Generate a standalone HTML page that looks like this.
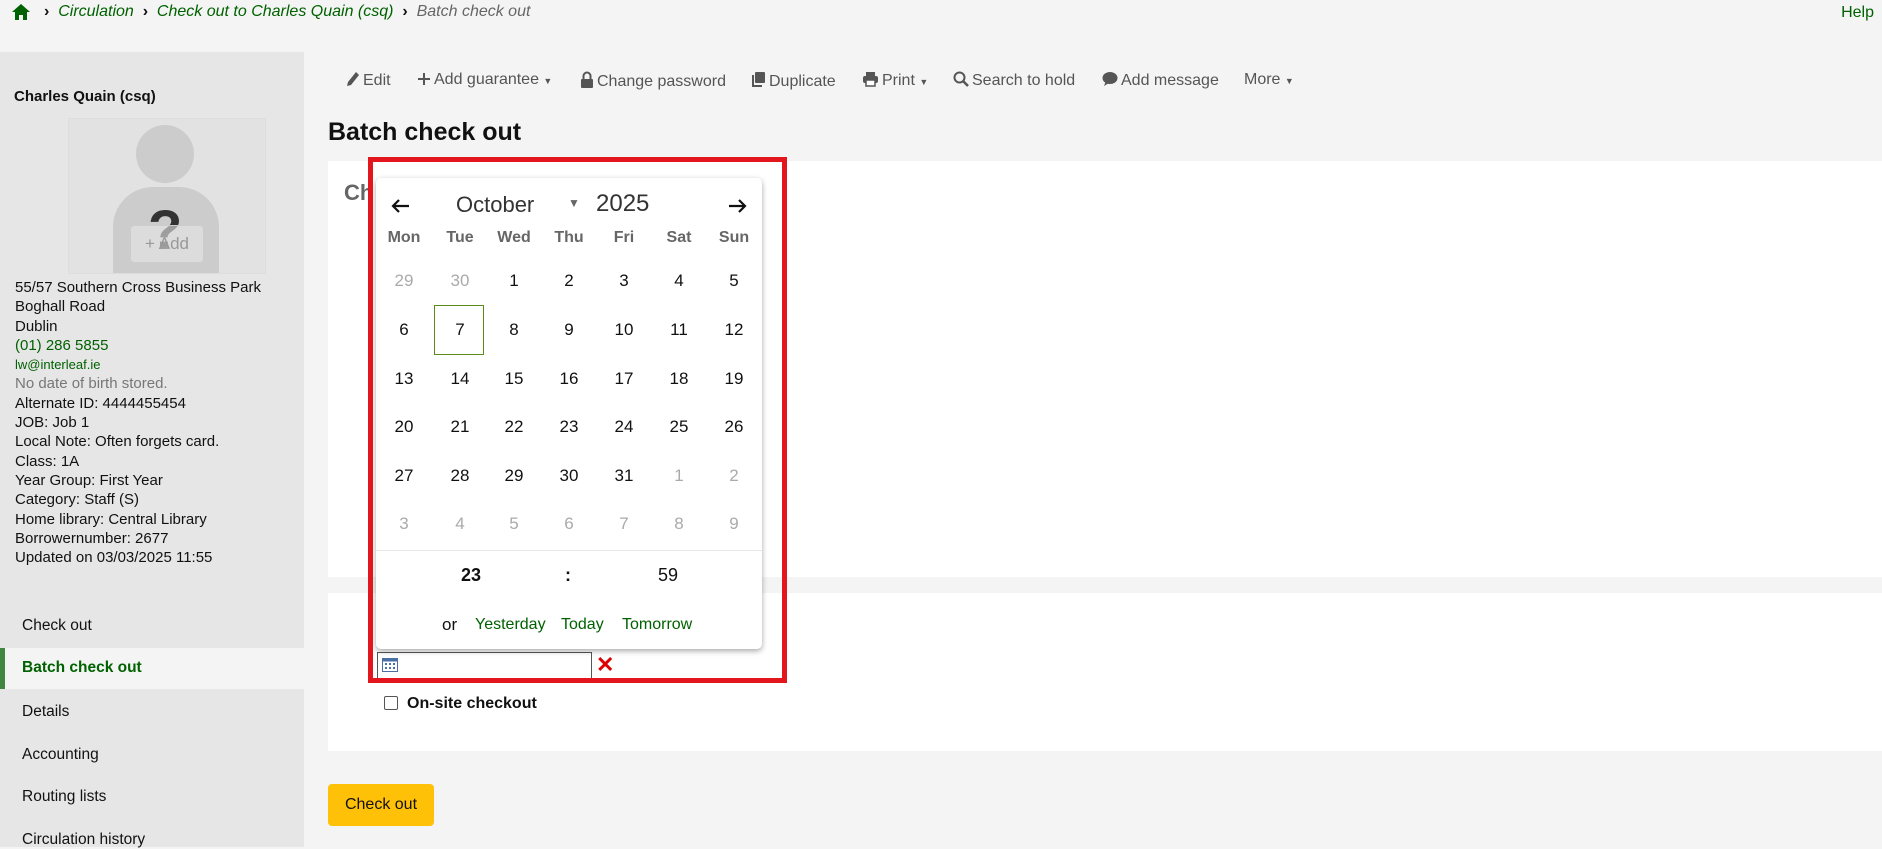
<!DOCTYPE html>
<html><head><meta charset="utf-8"><style>
*{box-sizing:border-box;margin:0;padding:0}
body{width:1882px;height:847px;overflow:hidden;background:#f3f4f3;font-family:"Liberation Sans",sans-serif;color:#111;position:relative}
.a{position:absolute;white-space:nowrap}
.g{color:#006100}
.side{position:absolute;left:0;top:52px;width:304px;height:795px;background:#e6e6e6}
.info{position:absolute;left:15px;top:278px;font-size:15px;line-height:19.3px}
.menu{position:absolute;left:22px;font-size:15.5px}
.tb{top:71px;font-size:16px;color:#555}
.tb svg{vertical-align:-2px;margin-right:3px}
.cal{position:absolute;left:376px;top:178px;width:386px;height:471px;background:#fff;border-radius:5px;box-shadow:0 2px 6px rgba(0,0,0,.35)}
.c{position:absolute;width:56px;text-align:center;font-size:17px;transform:translateX(-28px)}
.dn{font-weight:bold;color:#666;font-size:16px}
.gr{color:#aaa}
</style></head><body>
<svg class="a" style="left:11px;top:3px" width="20" height="18" viewBox="0 0 20 18"><path d="M10 1 L1 9 H4 V17 H8 V12 H12 V17 H16 V9 H19 Z" fill="#006100"/></svg>
<div class="a" style="left:44px;top:3px;font-size:16px;font-style:italic"><b style="font-style:normal">&#8250;</b>&nbsp;&nbsp;<span class="g">Circulation</span>&nbsp;&nbsp;<b style="font-style:normal">&#8250;</b>&nbsp;&nbsp;<span class="g">Check out to Charles Quain (csq)</span>&nbsp;&nbsp;<b style="font-style:normal">&#8250;</b>&nbsp;&nbsp;<span style="color:#666">Batch check out</span></div>
<div class="a g" style="right:8px;top:4px;font-size:16px">Help</div>

<div class="side">
<div class="a" style="left:14px;top:36px;font-size:15px;font-weight:bold">Charles Quain (csq)</div>
<div class="a" style="left:68px;top:66px;width:198px;height:156px;border:1px solid #ddd;background:#e2e2e2;overflow:hidden">
<div class="a" style="left:67px;top:6px;width:58px;height:58px;border-radius:50%;background:#ccc"></div>
<div class="a" style="left:44px;top:68px;width:106px;height:100px;border-radius:40px 40px 0 0;background:#ccc"></div>
<div class="a" style="left:79px;top:78px;font-size:56px;font-weight:bold;color:#333">?</div>
<div class="a" style="left:61px;top:106px;width:74px;height:38px;border:1px solid #ccc;border-radius:4px;background:rgba(230,230,230,.6);font-size:17px;color:#999;text-align:center;line-height:36px">+ Add</div>
</div>
</div>
<div class="info">
55/57 Southern Cross Business Park<br>Boghall Road<br>Dublin<br><span class="g">(01) 286 5855</span><br><span class="g" style="font-size:13px">lw@interleaf.ie</span><br><span style="color:#777">No date of birth stored.</span><br>Alternate ID: 4444455454<br>JOB: Job 1<br>Local Note: Often forgets card.<br>Class: 1A<br>Year Group: First Year<br>Category: Staff (S)<br>Home library: Central Library<br>Borrowernumber: 2677<br>Updated on 03/03/2025 11:55</div>
<div class="a" style="left:0;top:648px;width:304px;height:41px;background:#f3f4f3;border-left:5px solid #408540"></div>
<div class="menu a" style="top:617px">Check out</div>
<div class="menu a g" style="top:659px;font-weight:bold">Batch check out</div>
<div class="menu a" style="top:703px">Details</div>
<div class="menu a" style="top:746px">Accounting</div>
<div class="menu a" style="top:788px">Routing lists</div>
<div class="menu a" style="top:831px">Circulation history</div>

<div class="a tb" style="left:346px"><svg width="14" height="16" viewBox="0 0 14 16"><path d="M10 1 L13 4 L5 14 L1 15 L2 11 Z" fill="#555"/></svg>Edit</div>
<div class="a tb" style="left:417px"><svg width="14" height="14" viewBox="0 0 14 14"><path d="M7 1V13M1 7H13" stroke="#555" stroke-width="2"/></svg>Add guarantee <span style="font-size:9px">&#9660;</span></div>
<div class="a tb" style="left:580px"><svg width="14" height="17" viewBox="0 0 14 17"><path d="M3.5 8V5a3.5 3.5 0 0 1 7 0v3" fill="none" stroke="#555" stroke-width="2"/><rect x="1" y="8" width="12" height="9" rx="1" fill="#555"/></svg>Change password</div>
<div class="a tb" style="left:750px"><svg width="16" height="17" viewBox="0 0 16 17"><rect x="5" y="1" width="10" height="11" rx="1" fill="#555"/><path d="M3 4V15H12" fill="none" stroke="#555" stroke-width="2"/></svg>Duplicate</div>
<div class="a tb" style="left:862px"><svg width="17" height="16" viewBox="0 0 17 16"><rect x="4" y="1" width="9" height="4" fill="#555"/><rect x="1" y="5" width="15" height="7" rx="2" fill="#555"/><rect x="4" y="9" width="9" height="6" fill="#fff" stroke="#555" stroke-width="1.5"/></svg>Print <span style="font-size:9px">&#9660;</span></div>
<div class="a tb" style="left:953px"><svg width="16" height="16" viewBox="0 0 16 16"><circle cx="6.5" cy="6.5" r="5" fill="none" stroke="#555" stroke-width="2"/><path d="M10 10L15 15" stroke="#555" stroke-width="2.5"/></svg>Search to hold</div>
<div class="a tb" style="left:1102px"><svg width="16" height="16" viewBox="0 0 16 16"><ellipse cx="8" cy="7" rx="7.5" ry="6" fill="#555"/><path d="M2 15L4 10L7 12Z" fill="#555"/></svg>Add message</div>
<div class="a tb" style="left:1244px">More <span style="font-size:9px">&#9660;</span></div>

<div class="a" style="left:328px;top:118px;font-size:25px;font-weight:bold">Batch check out</div>
<div class="a" style="left:328px;top:161px;width:1554px;height:416px;background:#fff"></div>
<div class="a" style="left:344px;top:180px;font-size:22px;font-weight:bold;color:#666">Ch</div>
<div class="a" style="left:328px;top:593px;width:1554px;height:158px;background:#fff"></div>
<div class="a" style="left:328px;top:784px;width:106px;height:42px;background:#ffc107;border-radius:4px;font-size:16px;text-align:center;line-height:42px">Check out</div>

<div class="a" style="left:377px;top:652px;width:215px;height:27px;border:1px solid #555;background:#fff"></div>
<svg class="a" style="left:382px;top:657px" width="16" height="15" viewBox="0 0 16 15"><rect x=".5" y="1.5" width="15" height="13" fill="#fff" stroke="#4a6fa5"/><rect x=".5" y="1.5" width="15" height="3" fill="#4a6fa5"/><g fill="#4a6fa5"><rect x="3" y="6" width="2" height="2"/><rect x="7" y="6" width="2" height="2"/><rect x="11" y="6" width="2" height="2"/><rect x="3" y="10" width="2" height="2"/><rect x="7" y="10" width="2" height="2"/><rect x="11" y="10" width="2" height="2"/></g></svg>
<div class="a" style="left:596px;top:652px;font-size:22px;color:#d00;font-weight:bold">&#10005;</div>
<div class="a" style="left:384px;top:696px;width:14px;height:14px;border:1px solid #555;border-radius:2px;background:#fff"></div>
<div class="a" style="left:407px;top:695px;font-size:16px;font-weight:bold">On-site checkout</div>

<div class="cal">
<svg class="a" style="left:14px;top:20px" width="20" height="16" viewBox="0 0 20 16"><path d="M19 8H3M9 2L3 8L9 14" fill="none" stroke="#111" stroke-width="2.2"/></svg>
<div class="a" style="left:80px;top:14px;font-size:22px;color:#333">October</div>
<div class="a" style="left:192px;top:18px;font-size:12px;color:#666">&#9660;</div>
<div class="a" style="left:220px;top:12px;font-size:24px;color:#333">2025</div>
<svg class="a" style="left:352px;top:20px" width="20" height="16" viewBox="0 0 20 16"><path d="M1 8H17M11 2L17 8L11 14" fill="none" stroke="#111" stroke-width="2.2"/></svg>
<div class="a" style="left:58px;top:127px;width:50px;height:50px;border:1px solid #5a8a1a"></div>
<div class="a" style="left:0;top:372px;width:386px;height:1px;background:#e6e6e6"></div>
<div class="a" style="left:85px;top:387px;font-size:18px;font-weight:bold">23</div>
<div class="a" style="left:189px;top:387px;font-size:18px;font-weight:bold">:</div>
<div class="a" style="left:282px;top:387px;font-size:18px">59</div>
<div class="a" style="left:66px;top:437px;font-size:17px">or</div>
<div class="a g" style="left:99px;top:438px;font-size:16px">Yesterday</div>
<div class="a g" style="left:185px;top:438px;font-size:16px">Today</div>
<div class="a g" style="left:246px;top:438px;font-size:16px">Tomorrow</div>
</div>
<div id="grid"></div>
<div class="a" style="left:368px;top:157px;width:419px;height:526px;border:5px solid #e3161d"></div>
<script>
var xs=[404,460,514,569,624,679,734],ys=[281,330,379,427,476,524];
var h='',dn=['Mon','Tue','Wed','Thu','Fri','Sat','Sun'];
for(var i=0;i<7;i++)h+='<div class="c dn" style="left:'+xs[i]+'px;top:229px">'+dn[i]+'</div>';
var d=[29,30];for(var k=1;k<=31;k++)d.push(k);for(k=1;k<=9;k++)d.push(k);
for(var r=0;r<6;r++)for(i=0;i<7;i++){var n=r*7+i,g=(n<2||n>32);h+='<div class="c'+(g?' gr':'')+'" style="left:'+xs[i]+'px;top:'+(ys[r]-10)+'px">'+d[n]+'</div>';}
document.getElementById('grid').innerHTML=h;
</script>
</body></html>
